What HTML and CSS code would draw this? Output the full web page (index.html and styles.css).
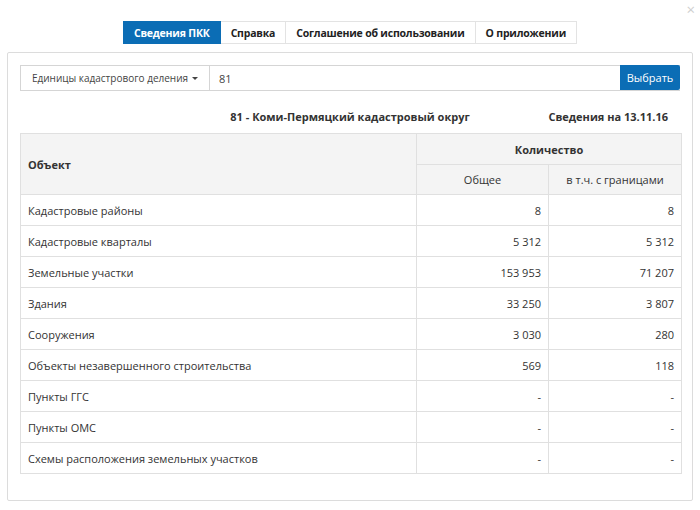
FILE: index.html
```html
<!DOCTYPE html>
<html lang="ru">
<head>
<meta charset="utf-8">
<link rel="stylesheet" href="styles.css">
</head>
<body>
<div class="dialog">
  <span class="close">×</span>
  <nav class="tabs">
    <span class="tab active">Сведения ПКК</span>
    <span class="tab">Справка</span>
    <span class="tab">Соглашение об использовании</span>
    <span class="tab">О приложении</span>
  </nav>
  <section class="panel">
    <div class="search">
      <div class="dropdown">Единицы кадастрового деления <span class="caret"></span></div>
      <div class="input">81</div>
      <div class="btn">Выбрать</div>
    </div>
    <div class="titlebar">
      <span></span>
      <span class="title">81 - Коми-Пермяцкий кадастровый округ</span>
      <span class="date">Сведения на 13.11.16</span>
    </div>
    <table class="data">
      <colgroup><col class="c1"><col class="c2"><col class="c3"></colgroup>
      <thead>
        <tr><th rowspan="2" class="obj">Объект</th><th colspan="2" class="qty">Количество</th></tr>
        <tr><th class="sub">Общее</th><th class="sub">в т.ч. с границами</th></tr>
      </thead>
      <tbody>
        <tr><td>Кадастровые районы</td><td class="n">8</td><td class="n">8</td></tr>
        <tr><td>Кадастровые кварталы</td><td class="n">5 312</td><td class="n">5 312</td></tr>
        <tr><td>Земельные участки</td><td class="n">153 953</td><td class="n">71 207</td></tr>
        <tr><td>Здания</td><td class="n">33 250</td><td class="n">3 807</td></tr>
        <tr><td>Сооружения</td><td class="n">3 030</td><td class="n">280</td></tr>
        <tr><td>Объекты незавершенного строительства</td><td class="n">569</td><td class="n">118</td></tr>
        <tr><td>Пункты ГГС</td><td class="n">-</td><td class="n">-</td></tr>
        <tr><td>Пункты ОМС</td><td class="n">-</td><td class="n">-</td></tr>
        <tr><td>Схемы расположения земельных участков</td><td class="n">-</td><td class="n">-</td></tr>
      </tbody>
    </table>
  </section>
</div>
</body>
</html>
```
FILE: styles.css
```css
html, body {
  margin: 0;
  padding: 0;
  background: #fff;
}
body {
  font-family: "Open Sans", "Noto Sans", sans-serif;
  font-size: 11px;
  color: #333;
}
.dialog {
  position: relative;
  padding: 21px 7px 10px 7px;
}
.close {
  position: absolute;
  top: 1px;
  right: 5px;
  font-size: 15px;
  color: #cfcfcf;
  line-height: 16px;
}
.tabs {
  display: flex;
  justify-content: center;
  height: 23px;
}
.tab {
  display: flex;
  align-items: center;
  padding: 0 10px;
  border: 1px solid #e3e3e3;
  border-left: none;
  font-weight: 700;
  font-size: 10.5px;
  letter-spacing: -0.2px;
  color: #222;
  white-space: nowrap;
}
.tab:first-child {
  border-left: 1px solid #e3e3e3;
}
.tab.active {
  background: #0b6db5;
  border-color: #0b6db5;
  color: #fff;
}
.panel {
  margin-top: 8px;
  border: 1px solid #dcdcdc;
  border-radius: 2px;
  height: 449px;
  box-sizing: border-box;
  padding: 12px;
}
.search {
  display: flex;
  height: 26px;
  box-sizing: border-box;
  border: 1px solid #d5d5d5;
  border-right: none;
}
.dropdown {
  width: 188px;
  flex: none;
  display: flex;
  align-items: center;
  justify-content: center;
  border-right: 1px solid #d5d5d5;
  color: #444;
  font-size: 10px;
  gap: 4px;
  white-space: nowrap;
}
.caret {
  width: 0;
  height: 0;
  border-left: 3px solid transparent;
  border-right: 3px solid transparent;
  border-top: 3px solid #444;
}
.input {
  flex: 1;
  display: flex;
  align-items: center;
  padding-left: 9px;
  color: #444;
}
.btn {
  width: 60px;
  flex: none;
  margin: -1px 0 0 0;
  height: 25px;
  background: #0b6db5;
  color: #fff;
  display: flex;
  align-items: center;
  justify-content: center;
  border-radius: 0 2px 2px 0;
}
.titlebar {
  display: grid;
  grid-template-columns: 1fr auto 1fr;
  margin-top: 16px;
  height: 18px;
  align-items: center;
  font-weight: 700;
  color: #333;
}
.date {
  justify-self: end;
  padding-right: 12px;
}
.data {
  margin-top: 8px;
  width: 661px;
  border-collapse: collapse;
  table-layout: fixed;
}
.c1 { width: 396px; }
.c2 { width: 132px; }
.c3 { width: 133px; }
.data th, .data td {
  border: 1px solid #e0e0e0;
  height: 31px;
  box-sizing: border-box;
  padding: 0 7px;
}
.data thead tr:nth-child(2) th {
  height: 30px;
}
.data th {
  background: #f4f4f4;
}
.obj {
  text-align: left;
  font-weight: 700;
}
.qty {
  font-weight: 700;
  text-align: center;
}
.sub {
  font-weight: 400;
  text-align: center;
}
.data td {
  color: #333;
}
.data td.n {
  text-align: right;
}
```
